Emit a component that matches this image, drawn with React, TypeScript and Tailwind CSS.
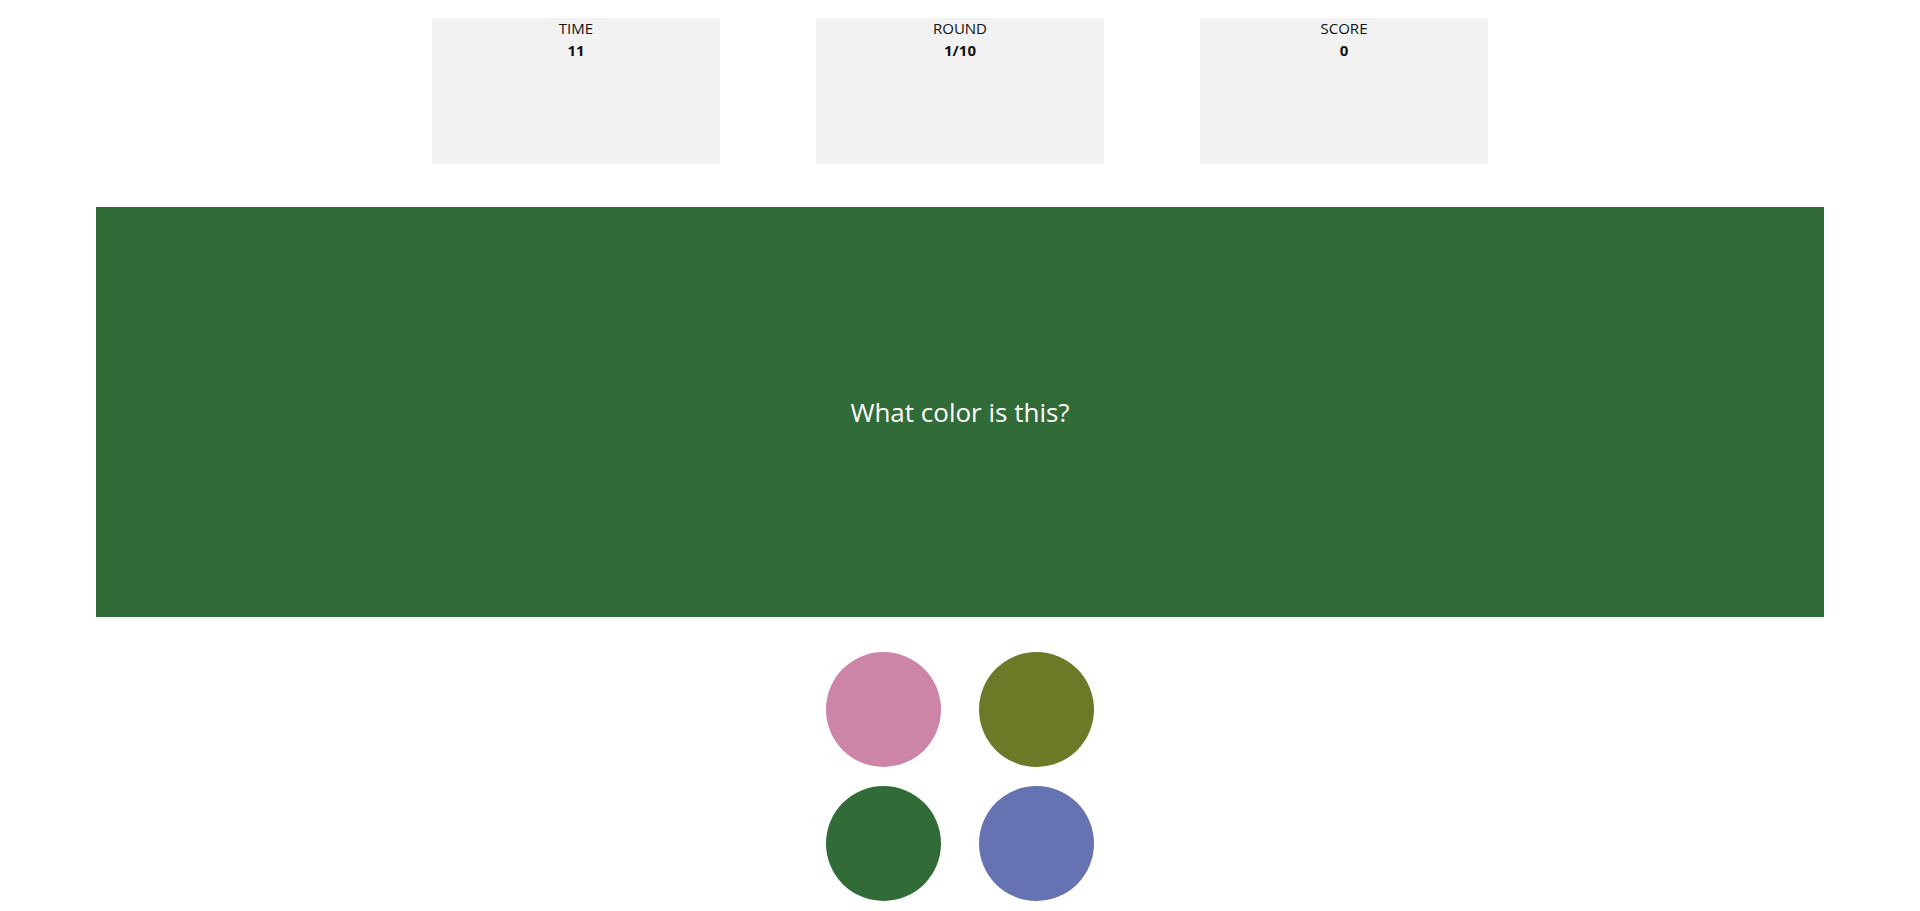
import React from "react";

const stats = [
  { label: "TIME", value: "11" },
  { label: "ROUND", value: "1/10" },
  { label: "SCORE", value: "0" },
];

const choices = ["#cc85a7", "#6e7928", "#316b38", "#6573b3"];

const App = () => {
  return (
    <div className="min-h-screen bg-white font-['Open_Sans','Liberation_Sans',sans-serif] text-[#111]">
      <div className="flex justify-center gap-[96px] pt-[18px]">
        {stats.map((s) => (
          <div
            key={s.label}
            className="w-[288px] h-[146px] bg-[#f2f2f2] flex flex-col items-center"
          >
            <span className="text-[15px] leading-[21px]">{s.label}</span>
            <span className="text-[15px] leading-[22px] font-bold">{s.value}</span>
          </div>
        ))}
      </div>

      <div className="mx-auto mt-[43px] w-[1728px] h-[410px] bg-[#316b38] flex items-center justify-center">
        <span className="text-white text-[26px]">What color is this?</span>
      </div>

      <div className="mx-auto mt-[35px] w-[268px] grid grid-cols-2 gap-x-[38px] gap-y-[19px]">
        {choices.map((c) => (
          <button
            key={c}
            className="w-[115px] h-[115px] rounded-full"
            style={{ backgroundColor: c }}
          />
        ))}
      </div>
    </div>
  );
};

export default App;
